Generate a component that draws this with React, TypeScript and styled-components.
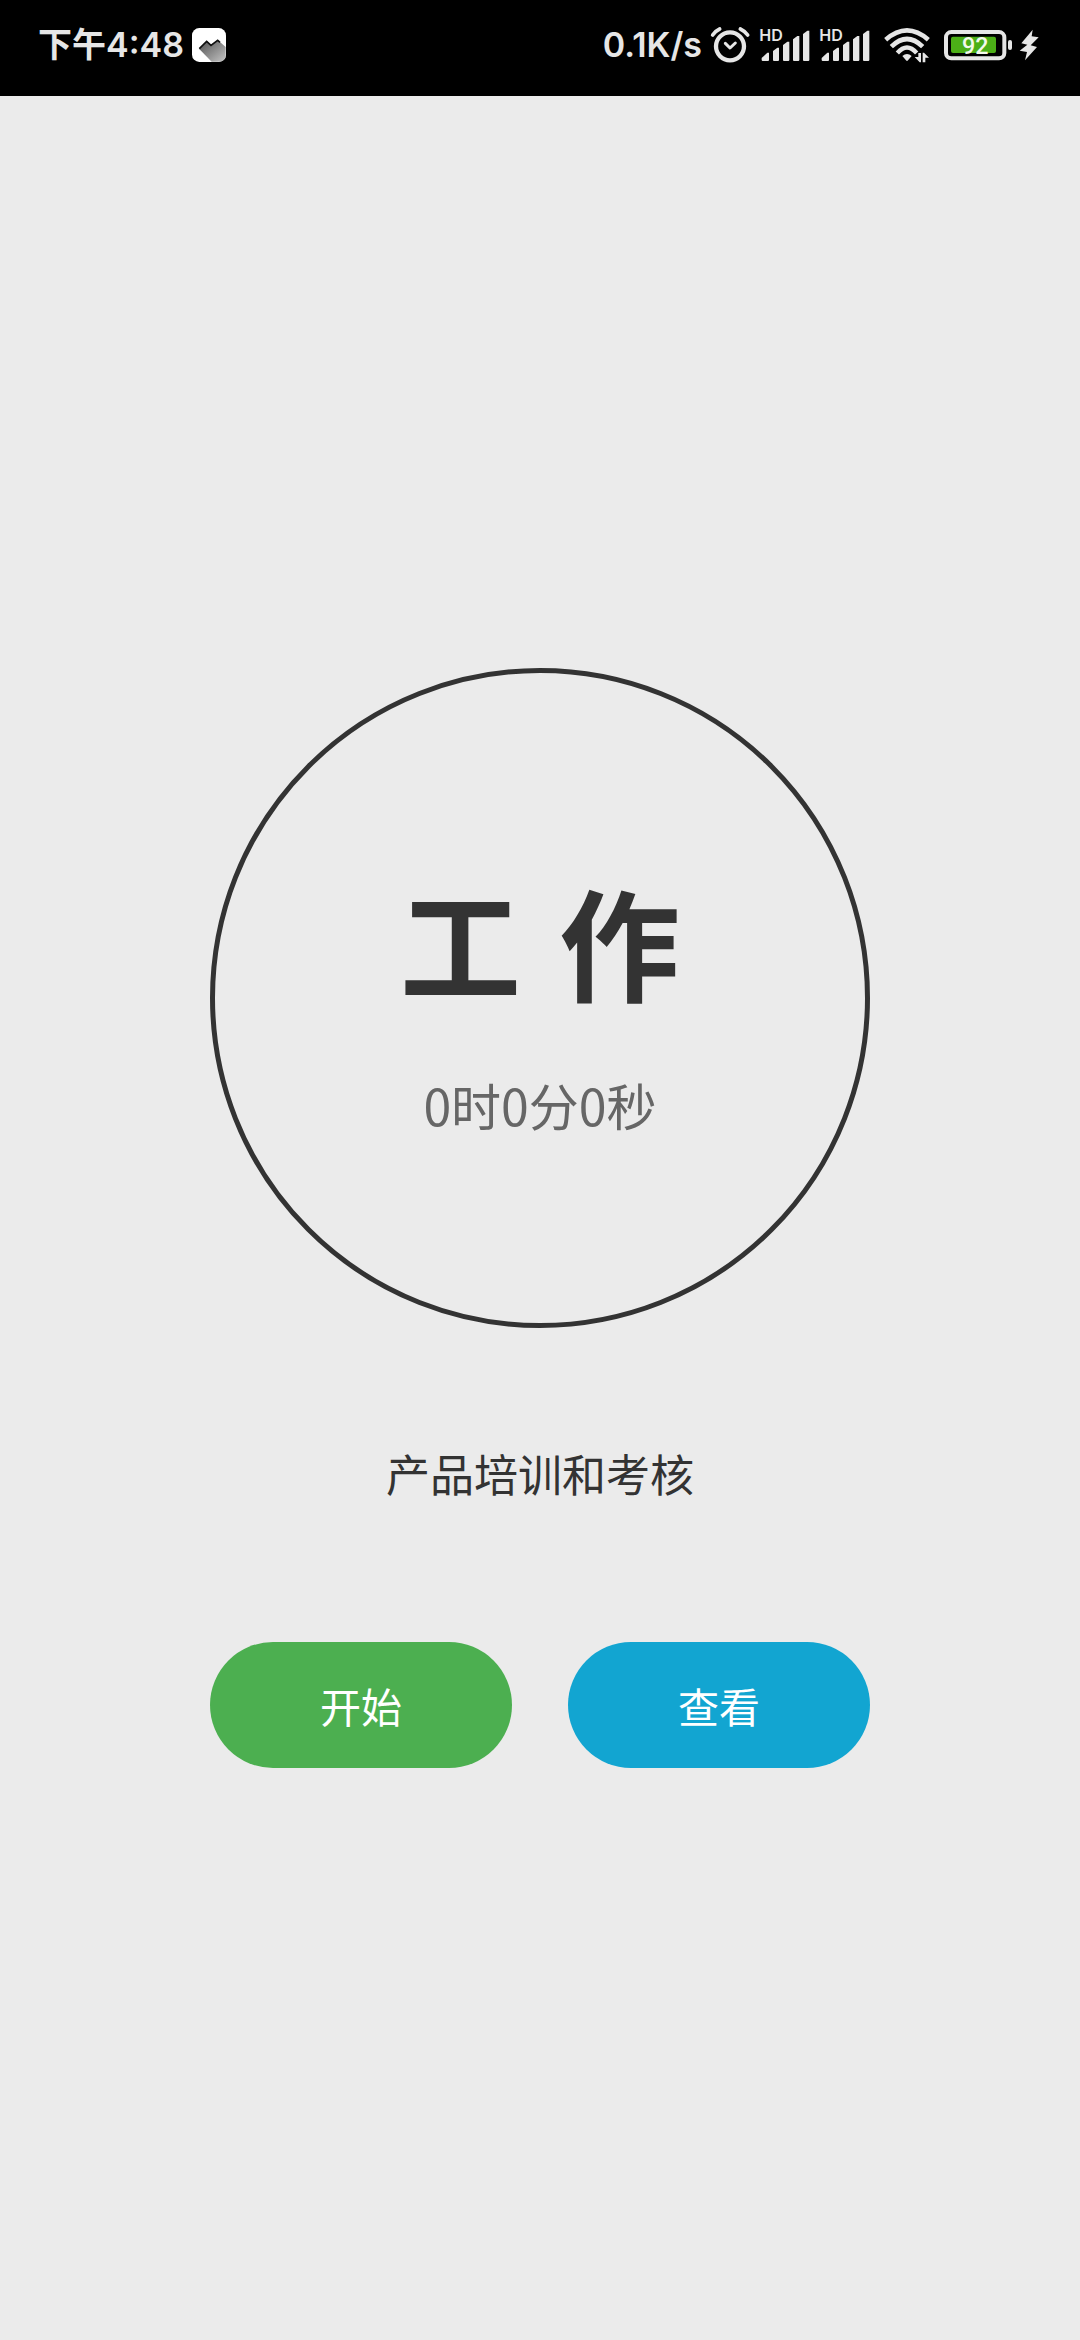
import React from "react";
import styled, { createGlobalStyle } from "styled-components";

const ink = "#333333";
const statusInk = "#e6e6e6";

const GlobalStyle = createGlobalStyle`
  *, *::before, *::after { box-sizing: border-box; }
  body {
    margin: 0;
    background: #ebebeb;
    font-family: "Noto Sans CJK SC", sans-serif;
  }
`;

const Screen = styled.div`
  display: flex;
  flex-direction: column;
  min-height: 100vh;
`;

const StatusBar = styled.header`
  display: flex;
  align-items: center;
  justify-content: space-between;
  height: 96px;
  padding: 0 41px 6px 38px;
  background: #000000;
  color: ${statusInk};
  font-family: Inter, "Noto Sans CJK SC", sans-serif;
  font-size: 34px;
  font-weight: 600;
  line-height: 48px;
  white-space: nowrap;

  svg {
    display: block;
    flex: none;
  }
`;

const StatusGroup = styled.div<{ $gap: number }>`
  display: flex;
  align-items: center;
  gap: ${(p) => p.$gap}px;
`;

const Main = styled.main`
  flex: 1;
  display: flex;
  flex-direction: column;
  align-items: center;
  justify-content: center;
`;

const Timer = styled.div`
  width: min(660px, 100% - 48px);
`;

const Dial = styled.section`
  display: flex;
  flex-direction: column;
  align-items: center;
  justify-content: center;
  gap: 40px;
  padding-top: 12px;
  aspect-ratio: 1;
  border: 5px solid ${ink};
  border-radius: 50%;
`;

const Mode = styled.h1`
  margin: 0;
  color: ${ink};
  font-family: "DejaVu Sans Condensed", "Noto Sans CJK SC", sans-serif;
  font-size: 121px;
  font-weight: 700;
  line-height: 160px;
`;

const Elapsed = styled.p`
  margin: 0;
  color: #666666;
  font-size: 50px;
  line-height: 66px;
`;

const Task = styled.p`
  margin: 112px 0 136px;
  color: ${ink};
  font-size: 44px;
  line-height: 66px;
  text-align: center;
`;

const Actions = styled.div`
  display: flex;
  gap: 56px;
`;

const ActionButton = styled.button<{ $color: string }>`
  flex: 1;
  height: 126px;
  padding: 0;
  border: 0;
  border-radius: 63px;
  background: ${(p) => p.$color};
  color: #ffffff;
  font-family: inherit;
  font-size: 41px;
  line-height: 60px;
`;

const GalleryIcon = () => (
  <svg width="34" height="34" viewBox="571 84 102 102" aria-hidden="true">
    <defs>
      <linearGradient id="peak" x1="0" y1="0" x2="1" y2="1">
        <stop offset="0.1" stopColor="#5a5a5a" />
        <stop offset="1" stopColor="#c4c4c4" />
      </linearGradient>
    </defs>
    <rect x="571" y="84" width="102" height="102" rx="22" fill="#ffffff" />
    <path d="M592 146L615 122L628 134L648 120L672 141V164Q672 185 651 185H630Z" fill="url(#peak)" />
    <path d="M593 146L615 124L628 136L648 121L655 127" fill="none" stroke="#111111" strokeWidth="5" />
  </svg>
);

const AlarmIcon = () => (
  <svg width="41" height="38" viewBox="385 78 123 114" fill="none" stroke={statusInk} strokeLinecap="round" aria-hidden="true">
    <circle cx="445" cy="139" r="42" strokeWidth="13" />
    <path d="M393 105Q401 93 414 87M476 87Q489 93 498 105" strokeWidth="11" />
    <path d="M431 130L445 144L461 129" strokeWidth="9" strokeLinejoin="round" />
  </svg>
);

const SignalIcon = () => (
  <svg width="52" height="46" viewBox="535 66 156 138" fill={statusInk} aria-hidden="true">
    <text x="536" y="123" fontFamily="Inter, sans-serif" fontSize="48" fontWeight="600">HD</text>
    <path d="M543 180V174L560 158H565V180Q565 183 562 183H546Q543 183 543 180Z" />
    <path d="M577 180V153L590 143H595V180Q595 183 592 183H580Q577 183 577 180Z" />
    <path d="M607 180V135L620 125H626V180Q626 183 623 183H610Q607 183 607 180Z" />
    <path d="M637 180V118L650 108H656V180Q656 183 653 183H640Q637 183 637 180Z" />
    <path d="M667 180V102L680 92H686V180Q686 183 683 183H670Q667 183 667 180Z" />
  </svg>
);

const WifiIcon = () => (
  <svg width="48" height="36" viewBox="183 84 144 108" fill="none" stroke={statusInk} aria-hidden="true">
    <path d="M191 122Q255 66 319 122" strokeWidth="14" />
    <path d="M208 143Q255 97 302 143" strokeWidth="14" />
    <path d="M226 162Q255 129 284 162" strokeWidth="13" />
    <path d="M241 171Q255 159 269 171L258 184Q255 188 252 184Z" fill={statusInk} stroke="none" />
    <path d="M278 174H289V162H297V190H293Z" fill={statusInk} stroke="none" />
    <path d="M321 176H310V190H302V161H306Z" fill={statusInk} stroke="none" />
  </svg>
);

const BatteryIcon = () => (
  <svg width="70" height="32" viewBox="366 87 210 96" role="img" aria-label="92%">
    <rect x="375" y="96" width="175" height="79" rx="16" fill="none" stroke={statusInk} strokeWidth="12" />
    <rect x="390" y="110" width="135" height="49" rx="6" fill="#4caf17" />
    <rect x="561" y="120" width="12" height="30" rx="6" fill={statusInk} />
    <text x="463" y="161" textAnchor="middle" fontFamily="Roboto, sans-serif" fontSize="70" fontWeight="500" fill="#f4f9ec">92</text>
  </svg>
);

const BoltIcon = () => (
  <svg width="20" height="32" viewBox="594 87 60 96" fill={statusInk} aria-hidden="true">
    <path d="M635 89L601 130L619 134L596 152L618 156L612 181L648 141L629 136L653 112L632 109Z" />
  </svg>
);

export default function App() {
  return (
    <>
      <GlobalStyle />
      <Screen>
        <StatusBar>
          <StatusGroup $gap={8}>
            <span>下午4:48</span>
            <GalleryIcon />
          </StatusGroup>
          <StatusGroup $gap={12}>
            <StatusGroup $gap={8}>
              <span>0.1K/s</span>
              <AlarmIcon />
              <SignalIcon />
              <SignalIcon />
            </StatusGroup>
            <WifiIcon />
            <StatusGroup $gap={6}>
              <BatteryIcon />
              <BoltIcon />
            </StatusGroup>
          </StatusGroup>
        </StatusBar>
        <Main>
          <Timer>
            <Dial>
              <Mode>工 作</Mode>
              <Elapsed>0时0分0秒</Elapsed>
            </Dial>
            <Task>产品培训和考核</Task>
            <Actions>
              <ActionButton type="button" $color="#4caf50">开始</ActionButton>
              <ActionButton type="button" $color="#12a5d1">查看</ActionButton>
            </Actions>
          </Timer>
        </Main>
      </Screen>
    </>
  );
}
